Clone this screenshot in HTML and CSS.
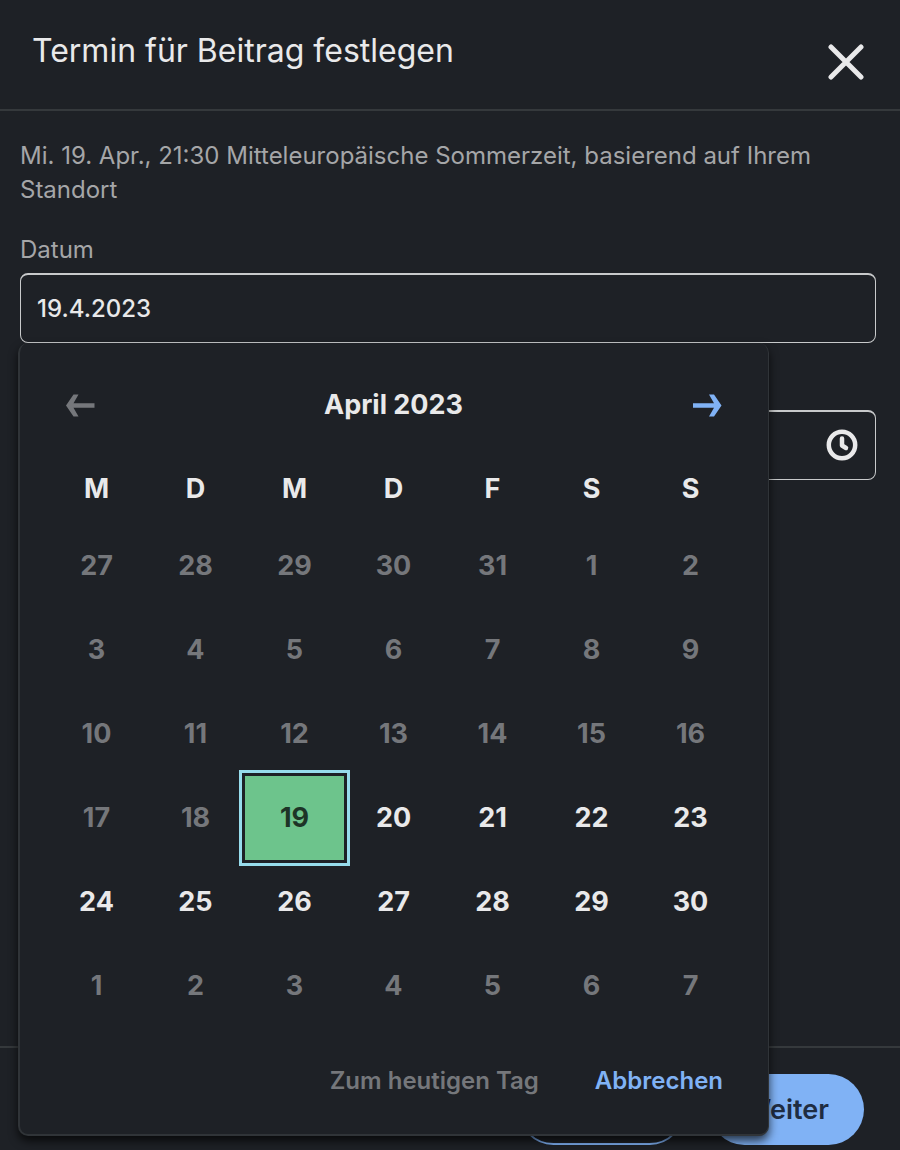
FILE: index.html
```html
<!DOCTYPE html>
<html lang="de">
<head>
    <meta charset="UTF-8">
    <meta name="viewport" content="width=device-width, initial-scale=1.0">
    <title>Termin für Beitrag festlegen</title>
    <link rel="stylesheet" href="styles.css">
</head>
<body>
    <header class="header">
        <h1>Termin für Beitrag festlegen</h1>
        <button type="button" class="close" aria-label="Schließen">
            <svg width="36" height="36" viewBox="0 0 36 36"><path d="M3 3 33 33M33 3 3 33"/></svg>
        </button>
    </header>

    <main class="content">
        <p class="info">Mi. 19. Apr., 21:30 Mitteleuropäische Sommerzeit, basierend auf Ihrem Standort</p>

        <label for="date">Datum</label>
        <div class="field">
            <input type="text" id="date" value="19.4.2023">

            <!-- Kalender -->
            <div class="calendar">
                <div class="calendar-nav">
                    <button type="button" class="prev" aria-label="Vorheriger Monat" disabled>
                        <svg width="30" height="24" viewBox="0 0 30 24"><path d="M1 12.5 8.5 1.5H13.5L8.5 10.2H29.5V14.8H8.5L13.5 23.5H8.5Z"/></svg>
                    </button>
                    <h2>April 2023</h2>
                    <button type="button" class="next" aria-label="Nächster Monat">
                        <svg width="30" height="24" viewBox="0 0 30 24"><path d="M29.5 12.5 22 1.5H17L22 10.2H1V14.8H22L17 23.5H22Z"/></svg>
                    </button>
                </div>
                <table>
                    <thead>
                        <tr><th>M</th><th>D</th><th>M</th><th>D</th><th>F</th><th>S</th><th>S</th></tr>
                    </thead>
                    <tbody>
                        <tr class="off"><td>27</td><td>28</td><td>29</td><td>30</td><td>31</td><td>1</td><td>2</td></tr>
                        <tr class="off"><td>3</td><td>4</td><td>5</td><td>6</td><td>7</td><td>8</td><td>9</td></tr>
                        <tr class="off"><td>10</td><td>11</td><td>12</td><td>13</td><td>14</td><td>15</td><td>16</td></tr>
                        <tr><td class="off">17</td><td class="off">18</td><td><button type="button" class="day selected">19</button></td><td><button type="button" class="day">20</button></td><td><button type="button" class="day">21</button></td><td><button type="button" class="day">22</button></td><td><button type="button" class="day">23</button></td></tr>
                        <tr><td><button type="button" class="day">24</button></td><td><button type="button" class="day">25</button></td><td><button type="button" class="day">26</button></td><td><button type="button" class="day">27</button></td><td><button type="button" class="day">28</button></td><td><button type="button" class="day">29</button></td><td><button type="button" class="day">30</button></td></tr>
                        <tr class="off"><td>1</td><td>2</td><td>3</td><td>4</td><td>5</td><td>6</td><td>7</td></tr>
                    </tbody>
                </table>
                <div class="calendar-actions">
                    <button type="button" disabled>Zum heutigen Tag</button>
                    <button type="button">Abbrechen</button>
                </div>
            </div>
        </div>

        <label for="time">Uhrzeit</label>
        <div class="field">
            <input type="text" id="time" value="21:30">
            <svg class="clock" width="32" height="32" viewBox="0 0 32 32"><circle cx="16" cy="16" r="13.2"/><path d="M16 9.5V16.5L20 19"/></svg>
        </div>
    </main>

    <footer class="footer">
        <button type="button" class="btn btn-outline">Zurück</button>
        <button type="button" class="btn btn-primary">Weiter</button>
    </footer>
</body>
</html>
```
FILE: styles.css
```css
* {
    box-sizing: border-box;
}

body {
    display: flex;
    flex-direction: column;
    min-height: 100vh;
    margin: 0;
    background-color: #1e2126;
    color: #e9e9ea;
    font-family: Inter, "Liberation Sans", sans-serif;
    font-size: 24px;
    line-height: 34px;
}

button {
    padding: 0;
    border: none;
    background: none;
    color: inherit;
    font: inherit;
    cursor: pointer;
}

svg {
    display: block;
}

.header {
    display: flex;
    justify-content: space-between;
    align-items: flex-start;
    padding: 28px 36px 29px 32px;
    border-bottom: 2px solid #35393c;
}

h1 {
    margin: 0;
    font-size: 32px;
    font-weight: 400;
    line-height: 46px;
}

.close {
    margin-top: 16px;
}

.close path {
    fill: none;
    stroke: #e9e9ea;
    stroke-width: 5;
    stroke-linecap: round;
}

.content {
    flex: 1;
    padding: 28px 24px 28px 20px;
    color: #a5a6a8;
}

.info {
    margin: 0 0 26px;
}

label {
    display: block;
    margin-bottom: 6px;
}

.field {
    position: relative;
    margin-bottom: 27px;
}

.field input {
    display: block;
    width: 100%;
    height: 70px;
    padding: 0 16px;
    border: 1px solid #c8cacb;
    border-top-width: 2px;
    border-radius: 8px;
    background: transparent;
    color: #e9e9ea;
    font: inherit;
    font-weight: 500;
}

.clock {
    position: absolute;
    top: 19px;
    right: 18px;
    fill: none;
    stroke: #e9e9ea;
    stroke-width: 4.5;
    stroke-linecap: round;
    stroke-linejoin: round;
}

/* Kalender */
.calendar {
    position: absolute;
    top: 100%;
    left: -2px;
    z-index: 10;
    width: 751px;
    padding: 39px 28px 36px 27px;
    border: 2px solid #303438;
    border-top: none;
    border-right-width: 1px;
    border-radius: 10px;
    background-color: #1e2126;
    box-shadow: 0 5px 10px rgba(0, 0, 0, 0.7);
    color: #e9e9ea;
    font-weight: 600;
}

.calendar-nav {
    display: flex;
    justify-content: space-between;
    align-items: center;
    padding: 0 18px;
}

.calendar-nav svg {
    fill: currentColor;
}

.calendar-nav .prev,
.calendar-actions button:disabled {
    color: #75777b;
}

.calendar-nav .next,
.calendar-actions button {
    color: #80b2f5;
}

h2 {
    margin: 0;
    font-size: 27px;
    font-weight: 700;
    line-height: 46px;
}

table {
    width: 100%;
    margin-bottom: 36px;
    border-collapse: collapse;
    table-layout: fixed;
    font-size: 27px;
    font-weight: 700;
}

th {
    height: 95px;
    padding: 26px 0 0;
    vertical-align: top;
    line-height: 70px;
}

td {
    height: 84px;
    padding: 0;
    text-align: center;
}

.off {
    color: #75777b;
}

.day {
    display: block;
    width: 100%;
    height: 84px;
}

.selected {
    background-color: #6dc48c;
    color: #1d3427;
    outline: 3px solid #97dcec;
    outline-offset: 3px;
}

.calendar-actions {
    display: flex;
    justify-content: flex-end;
    gap: 56px;
    padding: 0 17px;
}

.footer {
    display: flex;
    justify-content: flex-end;
    gap: 24px;
    padding: 26px 36px 5px;
    border-top: 2px solid #35393c;
}

.btn {
    height: 71px;
    padding: 0 35px;
    border-radius: 36px;
    font-size: 27px;
    font-weight: 600;
}

.btn-outline {
    border: 2px solid #80b2f5;
    color: #80b2f5;
}

.btn-primary {
    background-color: #80b2f5;
    color: #1f2d42;
}
```
